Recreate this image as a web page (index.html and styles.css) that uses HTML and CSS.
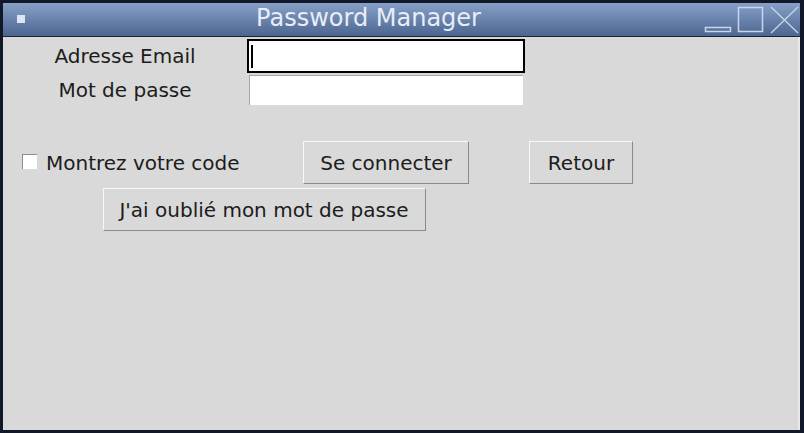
FILE: index.html
```html
<!DOCTYPE html>
<html lang="fr">
<head>
<meta charset="utf-8">
<title>Password Manager</title>
<link rel="stylesheet" href="styles.css">
</head>
<body>
<div class="window">
  <div class="titlebar">
    <div class="menu-icon"></div>
    <div class="title">Password Manager</div>
    <svg class="controls" width="96" height="33" viewBox="0 0 96 33">
      <rect x="1.5" y="24.5" width="25" height="4" fill="none" stroke="#c9d5ea" stroke-width="1.5"/>
      <rect x="34.5" y="4.5" width="24" height="24" fill="none" stroke="#c9d5ea" stroke-width="1.5"/>
      <path d="M67 4 L94 30 M94 4 L67 30" stroke="#c9d5ea" stroke-width="1.3" fill="none"/>
    </svg>
  </div>
  <div class="content">
    <div class="form">
      <div class="label r1">Adresse Email</div>
      <div class="entry focus r1"><span class="caret"></span></div>
      <div class="label r2">Mot de passe</div>
      <div class="entry r2"></div>
      <label class="check r3"><span class="box"></span><span>Montrez votre code</span></label>
      <button class="btn connect r3">Se connecter</button>
      <button class="btn back r3">Retour</button>
      <button class="btn forgot r4">J'ai oublié mon mot de passe</button>
    </div>
  </div>
</div>
</body>
</html>
```
FILE: styles.css
```css
html, body {
  margin: 0;
  padding: 0;
  background: #111828;
}
.window {
  width: 804px;
  height: 433px;
  box-sizing: border-box;
  padding: 3px 4px 3px 3px;
  background: #111828;
  display: flex;
  flex-direction: column;
  font-family: "DejaVu Sans", sans-serif;
}
.titlebar {
  height: 33px;
  flex: none;
  background: linear-gradient(#87a0c8, #4c6690);
  display: flex;
  align-items: center;
  border-bottom: 1px solid #1a2236;
}
.menu-icon {
  width: 8px;
  height: 8px;
  background: #dde4f4;
  margin-left: 14px;
  margin-top: -1px;
}
.title {
  flex: 1;
  text-align: center;
  color: #e8edf7;
  font-size: 24px;
  line-height: 33px;
  margin-left: 8px;
  margin-bottom: 2px;
}
.controls {
  flex: none;
  margin-right: 0;
  display: block;
}
.content {
  flex: 1;
  background: #d9d9d9;
  border-right: 2px solid #e9e9ec;
}
.form {
  display: grid;
  grid-template-columns: 244px 278px 120px;
  grid-template-rows: 36px 34px 34px 47px 43px;
  color: #1c1c1c;
  font-size: 20px;
}
.r1 { grid-row: 1; }
.r2 { grid-row: 2; }
.r3 { grid-row: 4; }
.r4 { grid-row: 5; }
.label {
  grid-column: 1;
  text-align: center;
  align-self: center;
}
.label.r1 { margin-top: 2px; }
.entry {
  grid-column: 2;
  height: 34px;
  box-sizing: border-box;
  border: 2px solid #d9d9d9;
  background: #fff;
  box-shadow: inset 1px 1px 0 #a8a8a8;
  align-self: end;
  position: relative;
}
.entry.focus {
  border-color: #000;
  box-shadow: none;
}
.caret {
  position: absolute;
  left: 2px;
  top: 4px;
  width: 2px;
  height: 23px;
  background: #000;
}
.check {
  grid-column: 1;
  display: flex;
  align-items: center;
  gap: 9px;
  margin-left: 19px;
  align-self: start;
  height: 43px;
}
.box {
  width: 15px;
  height: 15px;
  box-sizing: border-box;
  background: #fff;
  border-top: 1px solid #8e8e8e;
  border-left: 1px solid #8e8e8e;
  margin-top: -2px;
}
.btn {
  font-family: "DejaVu Sans", sans-serif;
  font-size: 20px;
  color: #1c1c1c;
  background: #d9d9d9;
  height: 43px;
  box-sizing: border-box;
  border: 1px solid;
  border-color: #f8f8f8 #8a8a8a #8a8a8a #f8f8f8;
  padding: 0;
  justify-self: center;
  align-self: start;
}
.connect { grid-column: 2; width: 166px; }
.back { grid-column: 3; width: 104px; justify-self: start; margin-left: 4px; }
.forgot { grid-column: 1 / 3; width: 323px; align-self: end; }
```
